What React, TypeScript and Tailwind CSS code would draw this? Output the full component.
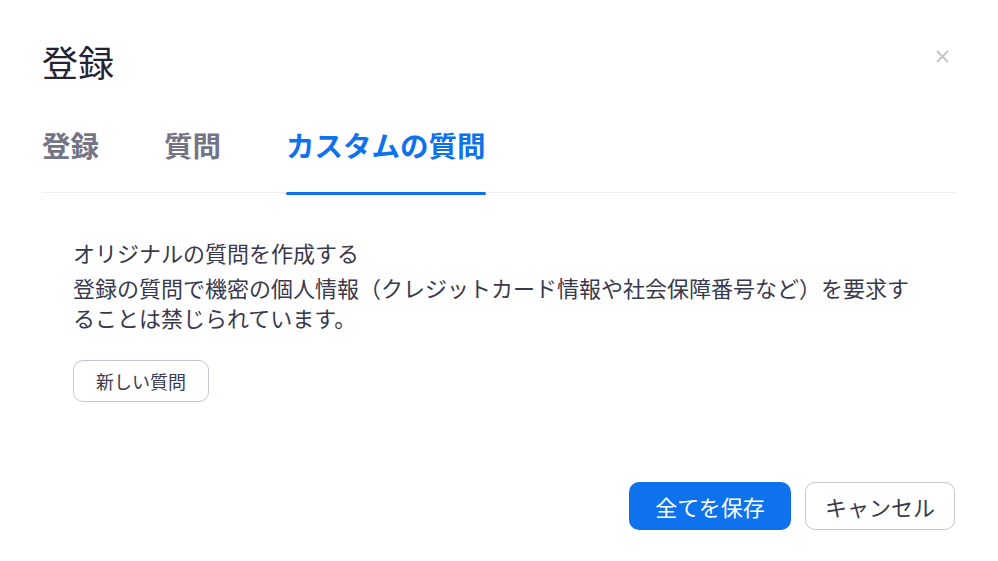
import React from "react";

export default function App() {
  const tabs = ["登録", "質問", "カスタムの質問"];
  const active = 2;
  return (
    <div
      className="w-[998px] h-[561px] bg-white flex flex-col pt-[34px] pl-[42px] pr-[43px] pb-[31px]"
      style={{ fontFamily: '"Noto Sans CJK JP", "Noto Sans", sans-serif' }}
    >
      <div className="flex items-start justify-between h-[54px]">
        <h1 className="text-[36px] leading-[54px] font-normal text-[#232333]">登録</h1>
        <button className="mt-[15px] mr-[6px] w-[14px] h-[14px] flex items-center justify-center text-[#c2c2cc]">
          <svg width="13" height="13" viewBox="0 0 13 13" fill="none" stroke="currentColor" strokeWidth="1.8" strokeLinecap="round">
            <path d="M1.5 1.5 L11.5 11.5 M11.5 1.5 L1.5 11.5" />
          </svg>
        </button>
      </div>

      <div className="mt-[36px] flex gap-[65px] border-b border-[#ededf4]">
        {tabs.map((t, i) => (
          <div
            key={t}
            className={`relative pb-[26px] text-[28.5px] leading-[42px] font-bold ${
              i === active ? "text-[#0e72ed]" : "text-[#747487]"
            }`}
          >
            {t}
            {i === active && (
              <div className="absolute left-0 right-0 bottom-[-3px] h-[3px] rounded-full bg-[#0e72ed]" />
            )}
          </div>
        ))}
      </div>

      <div className="pl-[31px] mt-[44px] text-[#39394d] text-[22px] leading-[30px]">
        <p>オリジナルの質問を作成する</p>
        <p className="mt-[5px] w-[850px]">
          登録の質問で機密の個人情報（クレジットカード情報や社会保障番号など）を要求することは禁じられています。
        </p>
        <button className="mt-[28px] h-[42px] px-[22px] rounded-[10px] border border-[#c5c5d3] bg-white text-[18px] leading-[24px] text-[#39394d]">
          新しい質問
        </button>
      </div>

      <div className="mt-auto flex justify-end gap-[14px]">
        <button className="h-[48px] w-[162px] rounded-[10px] bg-[#0e72ed] text-white text-[22px]">
          全てを保存
        </button>
        <button className="h-[48px] w-[150px] rounded-[10px] border border-[#c5c5d3] bg-white text-[#39394d] text-[22px]">
          キャンセル
        </button>
      </div>
    </div>
  );
}
